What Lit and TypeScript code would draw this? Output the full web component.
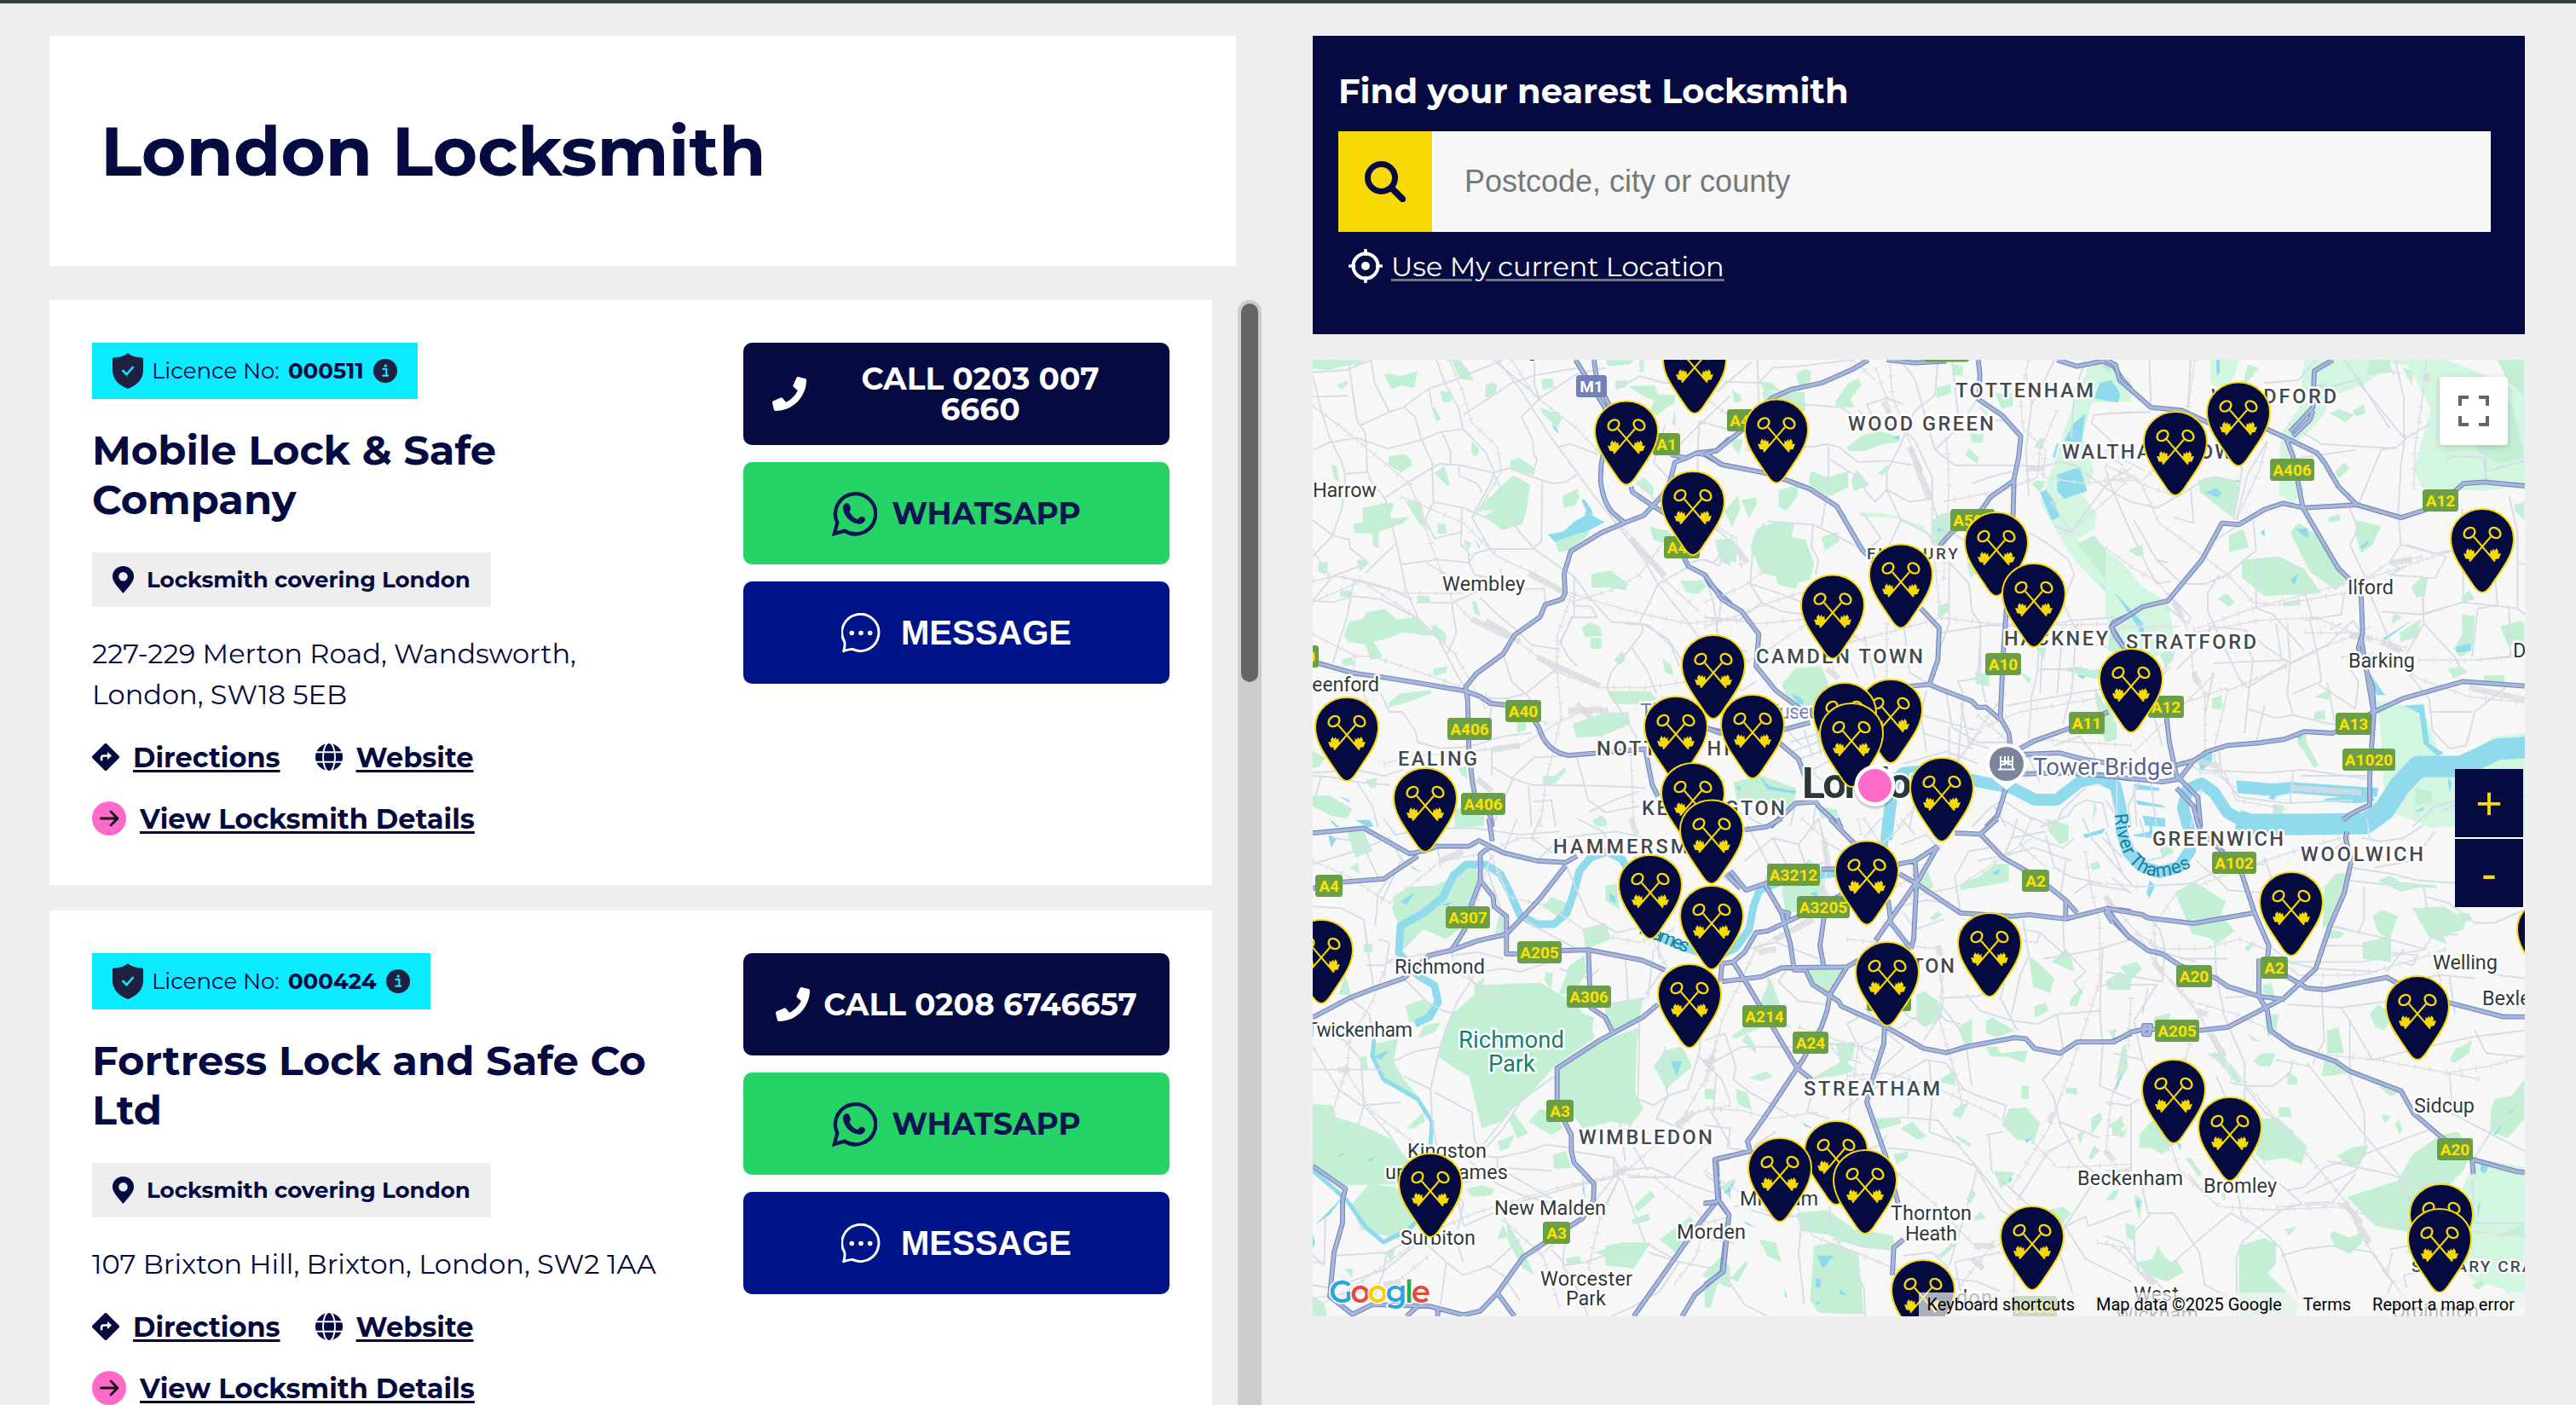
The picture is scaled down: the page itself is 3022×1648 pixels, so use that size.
import { LitElement, html, svg, css } from 'lit';
import { customElement, property } from 'lit/decorators.js';

interface Locksmith {
  licence: string;
  name: string;
  area: string;
  address: string;
  phone: string;
}

interface Tile {
  x: number;
  y: number;
  sy: number;
  parks: string;
  light?: string;
  water?: string;
  minor: string;
  rail: string;
  yard?: string;
  major: string;
}

const LOCKSMITHS: Locksmith[] = [
  {
    licence: '000511',
    name: 'Mobile Lock & Safe Company',
    area: 'London',
    address: '227-229 Merton Road, Wandsworth, London, SW18 5EB',
    phone: '0203 007 6660',
  },
  {
    licence: '000424',
    name: 'Fortress Lock and Safe Co Ltd',
    area: 'London',
    address: '107 Brixton Hill, Brixton, London, SW2 1AA',
    phone: '0208 6746657',
  },
];

// x, y of the pin tip; later entries are drawn on top
const PINS: number[][] = [
  [1988, 486], [2626, 547.5], [2084, 567.5], [1908, 569.5], [2552, 582], [1986, 652],
  [2912, 696], [2342, 700], [2230, 737.5], [2386, 760], [2150, 773.5], [2010, 844],
  [2500, 860], [2218, 896], [2164, 900], [2056, 914], [1966, 916], [1580, 917],
  [2172, 924], [2278, 988], [1986, 994], [1672, 1000], [2008, 1037.5], [2190, 1085.5],
  [1936, 1102], [2688, 1122], [2008, 1138], [2990, 1154], [2334, 1170], [1550, 1178],
  [2214, 1204], [1982, 1230], [2836, 1244], [2550, 1342], [2616, 1386], [2154, 1414],
  [2088, 1434], [2188, 1448], [1678, 1452], [2864, 1488], [2384, 1514], [2862, 1517],
  [2256, 1577],
];

// text, centre x, centre y
const SHIELDS: [string, number, number][] = [
  ['M1', 1867, 453], ['A1', 1955, 521], ['A41', 1973, 642], ['A40', 1787, 834],
  ['A406', 1724, 855], ['A406', 1740, 943], ['A40', 1526, 770], ['A406', 2052, 493],
  ['A503', 2314, 610], ['A10', 2350, 779], ['A11', 2448, 848], ['A406', 2284, 411.5],
  ['A406', 2689, 551], ['A12', 2863, 587], ['A12', 2541, 829], ['A13', 2761, 849],
  ['A1020', 2779, 891], ['A4', 1559, 1039], ['A307', 1722, 1076], ['A205', 1806, 1117],
  ['A306', 1864, 1169], ['A3', 1830, 1303], ['A3', 1826, 1446], ['A3212', 2104, 1026],
  ['A3205', 2139, 1064], ['A2', 2388, 1033], ['A214', 2070, 1192], ['A24', 2124, 1223],
  ['A205', 2216, 1173], ['A232', 2387, 1533], ['A102', 2621, 1012], ['A20', 2574, 1145],
  ['A2', 2668, 1135], ['A205', 2554, 1209], ['A20', 2880, 1348],
];

// text, x, baseline, width, class
const LABELS: [string, number, number, number, string][] = [
  ['Edgware', 1768, 418, 80, 'town'],
  ['Harrow', 1540, 583, 75, 'town'],
  ['Wembley', 1692, 693, 97, 'town'],
  ['Greenford', 1516, 811, 102, 'town'],
  ['Ilford', 2754, 697, 54, 'town'],
  ['Barking', 2755, 783, 78, 'town'],
  ['Dagenham', 2948, 771, 108, 'town'],
  ['Twickenham', 1532, 1216, 125, 'town'],
  ['Richmond', 1636, 1142, 106, 'town'],
  ['Kingston', 1651, 1358, 93, 'town'],
  ['upon Thames', 1625, 1382.5, 144, 'town'],
  ['Surbiton', 1643, 1460, 88, 'town'],
  ['New Malden', 1753, 1425, 131, 'town'],
  ['Morden', 1967, 1453, 81, 'town'],
  ['Worcester', 1807, 1507.5, 108, 'town'],
  ['Park', 1837, 1531, 47, 'town'],
  ['Mitcham', 2041, 1414, 92, 'town'],
  ['Thornton', 2218, 1431, 95, 'town'],
  ['Heath', 2235, 1455, 61, 'town'],
  ['Beckenham', 2437, 1389.5, 124, 'town'],
  ['Bromley', 2585, 1398.5, 86, 'town'],
  ['Sidcup', 2832, 1305, 71, 'town'],
  ['Welling', 2854, 1137, 76, 'town'],
  ['Bexleyheath', 2912, 1178.5, 126, 'town'],
  ['West', 2503, 1526, 53, 'town'],
  ['Wickham', 2482, 1550, 97, 'town'],
  ['Orpington', 2806, 1546, 102, 'town'],
  ['Croydon', 2243, 1530, 94, 'town'],
  ['WOOD GREEN', 2168, 505, 171, 'district'],
  ['TOTTENHAM', 2294, 466, 162, 'district'],
  ['WALTHAMSTOW', 2419, 538, 200, 'district'],
  ['WOODFORD', 2594, 473, 147, 'district'],
  ['HACKNEY', 2351, 757, 122, 'district'],
  ['CAMDEN TOWN', 2060, 777.5, 196, 'district'],
  ['STRATFORD', 2494, 761, 153, 'district'],
  ['NOTTING HILL', 1873, 886, 187, 'district'],
  ['KENSINGTON', 1926, 955.5, 168, 'district'],
  ['EALING', 1640, 898, 93, 'district'],
  ['HAMMERSMITH', 1822, 1001, 205, 'district'],
  ['WIMBLEDON', 1852, 1342, 157, 'district'],
  ['STREATHAM', 2116, 1284.5, 160, 'district'],
  ['BRIXTON', 2184, 1141, 109, 'district'],
  ['GREENWICH', 2525, 991.5, 154, 'district'],
  ['WOOLWICH', 2699, 1009.5, 144, 'district'],
  ['FINSBURY PARK', 2190, 656, 172, 'district small'],
  ['ST MARY CRAY', 2829, 1491.5, 155, 'district small'],
  ['The', 1924, 842, 40, 'poi'],
  ['Museum', 2067, 843, 88, 'poi'],
  ['Tower Bridge', 2385, 909, 164, 'sight'],
  ['Richmond', 1711, 1229, 124, 'green'],
  ['Park', 1746, 1256.5, 55, 'green'],
  ['London', 2114, 936, 154, 'city'],
];

const TILES: Tile[] = [
  {
    x: 1530, y: 410, sy: 2.8,
    parks: `M30 34h180l-10 15-60 5-60 15-50-8zM283 78l55 8 60-15-5 30-8 25-42-8-35 12-20-35z
      M518 34h30l25 30 25 38-45-5-18-25zM113 120l38-20 5 10-22 22zM480 135l40 8-2 28-30 5z
      M640 115l20-8 20 12-10 30-35 8zM450 195l8-8 22 40-15 10zM590 300l27 30-15 25-15-20z
      M835 98l40-4 5 30-40 8zM832 190l35 15 30 0 10 20-20 40-15-25-35-30zM1060 34h100l-15 15-75 5z
      M1095 103l45-3-10 25-35 2zM1140 120l95-2 10 30 62 2-5 30-25 8-35 30-28-10 18-40-50-22z
      M1180 34h15v40h-15zM1295 240l10-45 2 60zM297 350l55-6 25 18 0 20-35 22-45-25zM95 380l20 0 8 55-18-10z
      M458 405l35-22 20 60-10 5zM725 365l30-10 55 32 0 25-85-20z
      M735 413l60 30-12 80-15 50-70 20-65-45 35-20-60 0 70-65zM908 480l55-22 5 25-15 30-40 8z
      M205 520l75-15 35 0-15 50 70-5-20 20-90 30 5 50-22-2-5-45-60 0-5-30 35-5zM355 498l55 0 20 90-20-10z
      M470 572l25 0 8 33-33 0zM880 620l50-40 80-30-10 60-70 50-35 5zM1165 440l30-22 35 35-5 30z
      M1215 580l35 10 30 5 30 30-50 10-30-10zM1450 625h50v85l-35-15zM185 690l30 0 5 20-25 20z
      M48 700l38-2-10 40-25-8zM130 792l35 0 0 20-40 0zM395 808l45 2 5 22-45-5zM590 828l15-2 15 50-20-8z
      M560 625l30 10-15 28zM1010 738l70-12 60 45-8 20-55-10-65 0zM1325 760l80-2 10 22-30 22-40-5z
      M160 892l45-5 15-25 65-10 40 35 60-8 70 60-30 0-80-10-50 20-50 10 30 50-40 10-20-50-60-10-15-20z
      M445 905l20 0 35 30 0 30-40-25zM975 915l30-20 35 15 10 30-60 5zM1008 948l38 0 0 35-38 0z
      M1090 1020l30-30 10 30-20 15zM1262 1015l30 20 8 35-30-10zM455 1048l50-8-5 22-45 10z
      M298 1160l40-30 110-12 0 12-90 30-60 15zM1065 1122l150 0 25 25-40 20-110-5zM745 1195l35 15 0 40-30 8z
      M945 1230l105-35 90-5 8 40-100 40-90 5zM30 1465l60 0 80 45-20 30-60-10-60-30z
      M840 1400l40 0 40-30 0 15-35 40-45 5zM30 1320l45 20-20 30-25 5zM215 1415l40-8 0 30-20 5z
      M540 1370l30 0 5 40-20-10zM530 1510l50-10 60 10-10 55-100 5zM1015 1545l30-15 20 15 0 20-40 0zM130 1020l40-10 5 25-35 5z`,
    water: `M975 495l12-3 25 35 5 20 40 20-60 30-40 10-50 15-25 10-25-25 60-10 30-30 40-20 5-20z
      M873 245l20 20 2 12-18-18zM597 620l20 25 0 10zM120 1465l40 15 0 8zM85 1538l40 30h-15zM180 1545l50 0 15 20-20 5z`,
    minor: `M30 75l120-8 85-33M155 152L30 155M30 85L60 200 90 290 130 365 145 410 140 480 130 530 100 610 30 680
      M155 34L165 100 185 230 215 275 218 310 222 400 235 430 285 490 320 620 340 700 355 780 400 880
      M235 34L248 110 300 205 350 190 405 150 440 128 495 112 555 90 700 34M200 248L300 205M440 128L450 190 480 230
      M350 190L390 220 412 295 450 370 455 500 425 560 460 620 550 600
      M30 330L90 305 185 290 215 300 295 325 410 298 480 270 555 262
      M465 34L500 120 545 195 558 260 600 300 640 340 670 405 650 450 590 550 620 600 655 655 810 655
      M485 270L515 335 515 375M545 385V415L610 440 625 470M145 408L225 402
      M280 490L350 445 475 375 550 380 665 405 720 390 870 440 920 435 960 410
      M665 405L690 450 750 590 810 655 900 715 950 745 1000 810 1080 895 1190 900 1280 950 1350 1050 1370 1090
      M838 430L835 630 810 650M665 34L830 160 765 220 805 300 808 345 820 360 805 410
      M680 34L760 130 870 290 1020 480 1190 680 1245 770 1330 870 1400 960
      M810 34L810 120 830 160 960 80 1060 60M560 215L730 110 810 85 900 70 970 60
      M30 560L100 610 160 625 160 650 225 700 100 745 30 825 100 830 170 810 270 820 395 880 465 940 500 1000 545 1080 565 1110
      M345 705L470 690 580 700 600 670 655 655M215 735L320 640M130 745L170 755 310 790 380 820
      M395 830L520 832 620 790 850 785M520 835L535 930 505 1000M620 815L680 870 745 920 800 970 900 985M580 700L600 740 700 760 690 720
      M700 1000L730 1090 790 1140 830 1220M895 320L935 310 1035 345M640 1125L640 1145 720 1145 780 1130 885 1050 960 1070
      M900 970L940 880 1030 880 1010 845 950 840M1190 900L1190 930 1140 990 1080 1060 1065 1110 1130 1210 1180 1290M1150 975L1210 1060 1240 1130
      M1130 900L1210 905 1290 970 1320 1040M270 1130L300 1190 345 1190 390 1250 400 1290 480 1310 580 1305 700 1270 800 1260
      M30 1390L180 1380 280 1400 350 1380M100 1030L150 880 175 760M660 1370L730 1408 800 1430 1040 1433 1200 1440
      M730 1408L810 1340 1000 1330M735 1410L690 1500 665 1565M790 1435L800 1568M960 1340L1000 1480 1060 1520 1180 1500
      M185 1420L240 1500 260 1568M30 1400L100 1405 180 1420 300 1430M1245 770L1350 715M1245 770L1200 860 1180 895
      M950 745L950 870M1350 110L1270 110 1180 88 1100 130M1385 340L1385 400M1270 250L1230 370 1290 430
      M455 500L560 520 660 560M555 520L552 640 580 670 580 700M805 1485L870 1480 885 1568M845 790L850 840 900 830M660 1305V1400M430 700L500 740
      M1390 235L1500 265M1300 330L1500 150M1390 235L1385 340M1360 700L1400 690 1440 700 1500 640M1420 770L1440 830 1460 960M660 1165L650 1240M30 1500L60 1400M950 870L900 960 930 1010 960 1040M1000 1520L1090 1480 1180 1450`,
    rail: `M30 185L130 255 215 320 370 440 400 510 450 650 520 820 590 890 700 920 890 1060 1040 1110 1200 1110 1500 1070
      M510 34L555 130 590 240 680 320 695 400 600 550M730 34L810 150 960 260 1050 350M30 760L110 745 230 765 350 800 560 800
      M30 935L180 1005 250 1010 500 1090 860 1230M340 485L400 505 560 570 680 680 820 740 900 790 1130 855 1350 900 1500 885
      M1100 560L1180 650 1260 750 1390 860M940 810L890 940 890 1060 905 1210 850 1420 830 1568
      M580 1320L760 1300 905 1220 1020 1170 1100 1200M30 660L90 745M1150 1330L1160 1568M280 1360L400 1330 560 1330M1080 790L1180 740 1260 640
      M180 1005L175 1050 230 1180 240 1280 160 1350M940 830L1080 790M1380 140L1500 220M1160 420L1240 500M30 830L200 760 380 870 530 1000 640 1180`,
    yard: 'M590 885L720 945M640 890L760 960M820 1010L1040 1105M1150 620L1270 745M790 735L910 795M930 1185L1070 1185M960 1165L1010 1210M660 1315L760 1300M610 1410L660 1450',
    major: `M955 34L1058 190 1065 280 1045 380 1043 430Q1052 505 1090 540L1130 570M1020 34L1030 100 1075 185
      M1500 290L1450 332 1380 340 1340 358 1305 370 1285 440 1260 480 1195 545 1130 568 1045 602 938 663 915 735 918 800 908 820 848 838 830 878 740 938 700 1000 605 1065 568 1108 575 1150 580 1320 592 1420 600 1460 655 1530 662 1568
      M1380 340L1410 345 1470 378 1500 383M1150 450L1155 468 1225 512 1290 550 1340 690 1352 712 1410 740 1425 768 1500 835
      M50 1030L170 1062 290 1078 420 1098 568 1122 620 1140 655 1162 715 1168 800 1205 825 1240Q850 1320 930 1333L1200 1312 1225 1430 1245 1468
      M1400 1240L1500 1262M1290 345L1340 355`,
  },
  {
    x: 2000, y: 410, sy: 2.8,
    light: `M1360 34L1440 60 1500 100V170L1360 175 1330 290 1370 400 1330 480 1380 540 1370 590 1310 620 1500 800V900L1400 790 1300 690 1240 600 1180 500 1220 400 1260 280 1300 170z
      M545 533l80 5 60 10 90 35-10 10-80-38-140-8z`,
    parks: `M190 105l50 5 20 25-50 5zM320 80l30-15 22 5 0 35-40 15zM200 140l150 0 5 60-60 20-80-30z
      M460 170l45-60 35-15 12 20-40 50 15 25-65 0zM95 130l30 20 5 20-25 5zM100 290l35 5-15 50-25-30z
      M870 50l38 2 0 33-38 0zM815 125l50-12 2 30-50 15zM500 320l60-40 60-10 65 15 0 18-70 10-50 20-60 0z
      M935 275l48 5-5 25-40 0zM915 345l15-20 35 30-5 20zM365 435l10-35 60 20 70-20 0 50-60 30-60-10z
      M515 430l20-35 45 50-55 20zM260 460l70-15-5 40-40 45-25-15zM70 530l45-50 10 40-30 65zM130 495l50-10 5 20-30 50z
      M35 625l60-5 20 30-5 50-60-20zM160 650l20-60 70-25 65 10-10 40 50 10 30 80-15 50-40 10-10 20-60-10-10-30-50-10z
      M408 615l60-15 5 30-50 30zM610 405l30-25 10 10-25 25zM800 560l30-20 60-10 40 10-60 60-60 40-15-5z
      M920 690l30 20 5 30-20 10zM820 845l35-15 5 30-40 25zM270 1100l50-55 90-5 25 55-20 90-100 5z
      M1020 140l40 10 20-10 5 45-40 10zM1150 440l20-10 30 5-20 35zM1420 930l50-50 30 30v100l-80-20z
      M1265 1045l60-5 20 15 65-10-10 40-60-10-70-20zM950 1060l50 5 0 40-45-5zM1165 980l35 0-5 40zM1110 1060l40 20-10 20z
      M1370 1110l80 120 0 50-40 10-20-50zM100 1420l100-20 120 40-5 65-100-10-100-5zM395 1500l70 10 5 25-60 5z
      M1310 640l60-30 130 150v100zM1400 34l30 10 0 40-30-20zM1160 320l20-30 15 5-10 35zM1370 1480l10 30-15 40z`,
    water: `M1370 160l20-50 40-10 30 40-15 33zM1265 300l35-60 40-30-15 95zM1240 410l80-25 25 80-80 25-25-25z
      M1180 470l20-10 30 40 20 50-30 10zM660 290l25-8 0 15zM305 1130l35 15 10 15-20 10zM815 585l25 5-15 10z
      M190 1400l40 35 90 15 0 10-100-15zM105 1435l25 0-8 15zM1225 350l15-45 5 5-15 50zM1390 765l60 55 50 60v15l-60-70zM1310 1070l30 0-8 12z`,
    minor: `M40 140L165 40M70 105L190 110 240 60 330 55 520 34M185 34L190 180M140 330L260 330 310 320 380 320 430 310 470 320 540 370 640 365 730 380
      M435 310L435 450 410 580M690 34L740 100 810 330 880 380 1100 380M820 34L810 150 740 200 720 240 690 310 640 400 640 460 690 560 650 640
      M440 360L540 420 570 470 600 500 640 460M540 200L600 250 570 180 640 160 700 180M690 250L740 300 800 420 800 500 850 640
      M870 34L880 120 890 200 900 250 810 330M900 250L940 190 960 160M970 190L1010 230 1060 235M1150 180L1170 150 1230 34M1130 80L1150 180 1130 330 1140 480
      M1110 380L1180 385 1250 370 1300 380 1420 460 1500 500M1230 580L1290 600 1320 560 1400 460 1440 420 1500 390
      M220 565L380 575 440 600 520 640 560 660M380 575L375 650 400 690 390 740M210 570L170 640 160 770 200 830 270 860 350 870
      M0 690L50 710 60 690 100 660M0 560L80 620M160 770L260 800 340 830M560 540L620 620 570 660M690 560L780 600 820 650 860 700 860 900 790 1080
      M830 930L1000 905 1180 910 1290 890 1440 880M860 700L930 770 940 860 970 900 970 1080M1140 600L1210 640 1280 690 1300 740 1260 830 1290 890
      M1180 910L1170 1060 1150 1140 1140 1280M1060 1170L1290 1130 1430 1110M1170 1050L1350 1050M1190 940L1180 1130M1260 910L1240 1130M1310 900L1290 1130 1260 1230M970 940L960 1080 890 1090 910 1130
      M970 1080L990 1160M700 900L720 1060 790 1100M560 940L600 1080M480 960L540 1080M850 1130L870 1240 960 1290 1070 1290M900 1160L930 1290 1000 1310M780 1120L760 1200 780 1320
      M760 1200L950 1250M770 1260L940 1310M700 1360L850 1320 960 1360M860 1240L860 1360M910 1150L890 1350M280 1240L340 1300M300 1290L440 1250M310 1320L450 1270M350 1250L380 1340M390 1240L410 1330M320 1350L460 1300M340 1400L440 1350
      M0 1040L60 1080 130 1120 180 1090M180 1040L230 1020 300 1010M0 950L70 980 150 990M0 1100L40 1110M60 1090L100 1160M0 880L120 890 200 830M60 820L40 930M0 1500L80 1500 200 1560M320 1490L300 1568M390 1500L380 1568
      M1110 1330L1200 1360 1240 1400 1330 1390M1140 1340L1180 1420M1230 1300L1320 1270 1370 1330 1380 1400M1180 1568L1280 1530 1300 1500 1340 1480 1400 1490 1420 1568M1230 1568L1260 1510 1340 1440
      M720 1568L740 1480M940 1568L1010 1500 1050 1480 1130 1530 1230 1568M1060 1568L1020 1500M1340 34L1300 140 1290 290M1360 240L1370 215 1500 205M1360 240L1500 360M870 600L930 640 920 690M940 440L1000 420 1080 400M1290 890L1330 960 1420 980M480 190L560 240 680 250M250 130L350 180 470 190M640 460L720 500 800 490`,
    rail: `M650 34L660 150 720 300 760 400 800 480 800 620 830 880 760 900 600 940 430 980M600 60L640 160M520 34L600 100
      M1140 34L1110 150 1120 260 1200 330 1190 420M1240 200L1180 330 1170 420 1060 460 840 500M850 290L860 440 840 760
      M0 910L100 880 230 830 330 800 540 800M0 830L130 780 250 700M0 560L110 620 130 720M0 1090L200 1000 360 900 500 880
      M430 960L460 1080M640 900L640 1080M830 880L1000 900 1240 905 1480 900M870 1380L1000 1200 1060 1130M870 1380L980 1240 1110 1190 1410 1140
      M1190 420L1340 440 1500 420M1220 500L1290 600 1500 420M340 1360L420 1420M0 880L200 900 420 880 560 960M680 1568L800 1440M1500 1300L1320 1290 1180 1280M960 1200L1070 1290 1150 1400`,
    yard: 'M630 170L650 210M740 370L790 490M720 320L760 400M430 1050L470 1080M110 650L150 700M1130 390L1190 390',
    major: `M0 345L45 330 130 265 235 160 300 132 410 110 520 65 575 34M0 340L60 378 210 405 290 430 370 458 465 515 555 660 600 700M760 850L825 915 820 1020 790 1100 730 1105 650 1115
      M640 34L740 44 850 38M962 34L968 80 965 165 1045 215 1112 285 1105 350 1088 425 1085 540 1060 870 1050 1000 1040 1210 1070 1260 1075 1300
      M1088 430L1005 485 975 525 870 600 825 645M790 1100L820 1112 940 1155 960 1175 990 1175 1040 1215
      M0 740L60 820 130 860 190 935 180 1040 250 1120 350 1190M1110 1310L1160 1285 1280 1245 1420 1190M1110 1330L1250 1325 1330 1345 1500 1370
      M1060 1440L1030 1530 990 1568M0 1240L60 1262M250 1255L370 1225M260 1290L330 1345 370 1450 400 1500 480 1568
      M1240 34L1310 55 1400 38 1440 55 1470 100 1500 130M1500 870L1440 895 1430 910 1480 985M230 1568L320 1490 400 1485M1110 1395L1250 1390 1420 1400 1500 1410`,
  },
  {
    x: 2470, y: 410, sy: 2.8,
    light: `M700 34h230l40 40-60 40-120 40-20 60-60 60-50 40 0 60 40 90-40 40-50-30 0-100 10-100 60-80zM940 34h260l60 20 215 90v300l-140 20-220-10-30-60 60-200-80-140z
      M0 660L60 700 130 780 220 830 240 930 180 1010 70 985 20 910 0 880zM940 1150l120 20 60 20 60 150 90-10 100-60 105-10v290l-330 20-160-60-20-300zM370 34h100l-20 60-50 50-30-40z`,
    parks: `M540 60l-60 70 20-80zM930 34h70l10 40-90 10zM700 130l60-20 60 25-60 25zM790 210l30-15 55 20-30 25zM870 200l40-20 5 30-35 10zM1045 60l35 10 0 50z
      M1380 34h95v120l-60-50zM1300 180l130-5 45 180-90 20-80-40zM325 430l60-15 70 15 20 30-15 60-15 30-110-80zM435 610l50-20 20 60-70 15zM490 690l120-10 90 40 60 80-200 10-80-60 0-60z
      M650 600l30-30 80 50 60 80 40 50-50 40-90-60zM810 400l30-30 20 20-40 35zM880 560l90 20-30 60-40 30-20-60zM785 550l40-8 0 20-40 5z
      M395 820l30-20 30 30-20 15zM1005 885l15-20 22 15-30 20zM1035 930l75-45-10 60-60 15zM1075 780l35-30 25 0-10 60-30 5zM1255 870l45 5-10 110-40 25-25-25 30-50z
      M1390 910l70-20 15 10v60l-60 10zM1205 1050l50-10 20 20-50 20zM1330 1070l75 0 0 25-70 10zM735 1140l60-25-10 35zM375 1145l35-10 0 45-35 0zM735 1190l35-5 5 30-40 0z
      M680 1250l20-5 10 50 40 70-15 10-40-60-20-20zM590 1495l35 0 0 30-35 0zM1090 1440l60 10 0 40-60 5zM1440 510l35-10v60l-35-30zM80 660l50-20 5 30-20 10z
      M690 690l60-15 10 30zM0 1150l30 60-10 70-20 0zM190 1000l40-20 10 40-30 20zM625 830l60-10 0 20-60 5zM1250 820l30-30 20 30-40 10z`,
    water: `M0 110l25 0 28 40-10 25-43-10zM350 470l40-15 20 20-20 10zM450 430l25 0 0 10zM670 590l40-5 5 35-20-10zM545 600l15-10 0 25zM650 755l30-20-15 40zM890 655l30-25 10 0-20 20z
      M785 730l40 35-45-40zM1235 975l50-10 0 25-50 5zM975 950l110-65-100 70zM675 1265l15 0 0 15-15-3zM460 1415l130 10 60-5 310 20-5 30-60-8-30 10-210-15-60 10-130-10zM770 1475l160-15 20 20-60 10-120-5zM590 1450l15 0-10 30-20-5z
      M325 1345l20-30 30 10 0 30-40 30zM100 1425l90 15 0 10-80-5zM105 1480l90 15 20 10-100-10zM130 1530l80 10 0 28-70-5zM920 1050l60 80 10 5-35 0zM1050 1170l70-5 20 130 50 30-20 10-50-40-15-100z
      M1205 1405l15 20-10 30zM1085 1520l40-20-10 15zM30 795l100 100 20 100-40-90zM390 34h12l0 40-10 15z`,
    minor: `M155 34L160 190M300 34L290 190M560 110L680 100 740 34M480 100L470 260 480 400 450 560M0 210L160 205M0 390L20 450 70 560 140 700 180 770 230 760
      M90 500L180 520 260 480 360 420M240 550L310 570 300 460M100 560L180 690 220 700M180 690L270 770 350 770 430 740M360 640L430 600 500 560M430 740L490 690 530 660
      M530 690L530 850M640 240L760 310 1020 325 1060 290 1150 240M1055 280L1040 380 1030 540M1020 34L1050 160 1050 290M760 130L880 100 920 140 1050 290
      M1200 360L1220 350 1330 355 1340 430M1340 400L1475 365M1340 400L1335 330M850 500L890 590 860 640 880 680 920 760M885 520L970 330 1020 320
      M1030 540L1040 640 1000 700 1040 720 1000 740 1160 750 1200 680 1040 640M1255 520L1260 830 1120 870 1115 820M1260 830L1450 850 1475 870M1420 480L1450 600 1450 850M1450 700L1475 705M1370 730L1380 840 1310 850 1290 1010M1300 1020L1425 1010 1420 840
      M400 740L360 800 360 860 470 1080 500 1110 640 1030M370 910L490 920 570 980 650 1030 780 970 870 890 900 930M490 920L500 980 520 1020 500 1160 490 1260M640 900L650 1030 640 1130 660 1200 790 1230 870 1230
      M720 890L750 1020 760 1090 660 1130M380 1030L640 1020M380 1060L350 1200M120 1420L80 1500 90 1568M860 1050L890 1090 880 1180 750 1100M780 1090L810 1240M790 920L830 900M840 800L830 870 700 890M700 790L730 890
      M560 1170L530 1290M500 1180L600 1210 660 1200M250 1050L350 960 370 910M230 1040L180 1090 120 1100M150 1080L170 1200 200 1300M270 1350L330 1380 560 1390 700 1380 920 1410
      M400 1320L410 1400 470 1470 640 1490 870 1480M660 1390L650 1490M40 1410L40 1568M160 1420L180 1568M100 1430L110 1568M340 1440L300 1568M690 1400L920 1400M1040 1030L1140 1150 1150 1250 1210 1310 1270 1300 1300 1190 1420 1100M1140 1190L1290 1190
      M1060 1000L1120 900 1230 1010 1250 1050M930 800L1010 980 1050 990M1180 1520L1260 1480 1340 1500 1475 1470M1080 1568L1160 1500 1280 1470M0 1480L30 1520M200 1060L240 1000 250 960M1115 740L1120 900M970 860L1110 870 1260 830M1060 640L1160 670 1220 660M570 300L500 410 460 560M60 380L0 340
      M520 560L530 660M530 850L590 870 700 990M600 900L620 1020M650 360L880 330M840 34L900 110 1000 260M210 840L290 900 300 880 240 820`,
    rail: `M315 34L290 190 240 480M0 380L120 430 190 570 320 660 430 740 520 830 600 840 840 800 1000 700M0 650L100 720 180 760 260 850 300 960 310 1080 350 1130 350 1320
      M310 930L540 890 740 880 870 930 1060 980M380 1320L430 1120 640 1040 760 980 900 930 930 910M310 920L520 850 840 770 930 750 1220 660M1130 34L1110 200 1090 320 1085 460M0 430L130 430 200 370M460 560L540 400 570 300
      M0 330L140 400M250 1170L430 1110M60 910L260 910M830 1010L1000 1000 1100 1080 1280 1140 1475 1160M1100 1020L1300 1020 1475 1000M330 1390L420 1390 460 1480 640 1510M1000 700L1120 680M100 1320L260 1180 380 1070M380 1330L400 1400 460 1440
      M960 60L1040 80M700 930L900 930M240 480L120 440 60 390`,
    yard: 'M310 1060L330 1100M1010 700L1080 690M1130 80L1130 110M240 830L270 880M860 940L940 950M970 960L1040 990M1280 1110L1475 1150M320 1350L400 1370M660 1440L900 1455',
    major: `M0 34L35 50 50 100 160 190 270 200 360 240 570 262 635 290 745 340 770 370 820 450 885 510M635 290L660 350 695 520 820 720 860 755 900 810 905 930 890 980 940 1110 945 1190 930 1400 930 1495 865 1525 835 1545
      M800 34L735 70 730 190 650 270M730 200L720 230 660 285M20 910L130 845 220 825 340 690 410 570 470 575 560 525 625 505 700 520 885 510 1040 552 1130 525 1200 490 1260 440 1335 435 1475 448
      M20 910L35 940 70 985M215 1210L225 1290 250 1400 325 1470 335 1568M250 1365L310 1350 360 1320 430 1300 540 1292 630 1280 700 1255 800 1260 945 1190 1050 1145 1260 1090 1475 1105
      M0 1400L100 1410 200 1420 260 1410 310 1350M250 1440L310 1500 330 1568M900 950L945 1200`,
  },
  {
    x: 1530, y: 960, sy: 2.6133,
    parks: `M600 540L600 510 635 487 630 510 830 503 960 570 1025 670 880 760 800 840 740 880 690 930 625 950 580 790 540 770 470 730 480 690 520 600z
      M895 765L1040 685 1180 640 1170 700 1165 840 1195 890 1150 940 1080 930 980 950 940 900 890 850zM1060 570L1195 550 1180 610 1090 650 1060 610z
      M30 875l70 5 10 35 75 20 115 45 80 80-30 60-205 5-115-60zM320 235l50-25 90-5 40-15 40-30 65-10 15 40-30 70-30 70-60 40-80-30-80 70-20-10 10-80-20-40z
      M165 1185l65-65 90 10 70 50-10 60-50 50-130-30zM355 575l60-20 35 10 0 40-80 20zM250 690l80-15-15 70 40 60 50 50-120-45-40-80zM420 635l60-10-20 30-60 20z
      M895 540l40-90 50-30 10 50-40 60zM850 470l25 5-5 50-25-30zM840 270l30-30 55 20-20 50zM980 340l80-20 20 50-90 30zM1060 205l40-5 10 80-50-30zM690 290l15 15-5 50-30 0z
      M960 590l60 20-10 60zM1230 760l40-50 60-10 35 60-90 70zM720 920l20-15 50 60-40 15zM790 930l40-40 60 20 20 40-40 20zM680 990l60-20-20 40-30 10zM875 1030l45-10 20 50-60 5z
      M1160 1190l60-50 15 20-60 45zM1250 1290l110-70 20 30-60 90zM1060 1310l60-10 100 0-60 80-100-10zM1020 1330l40-10 0 20zM920 1350l50-10 5 20-50 10zM570 1135l50-10 50 10-10 20-70 5zM680 1290l20-45 20 40z
      M710 1230l60 90 40 80-40-20-50-80zM1150 1230l60-20 10 20-60 15zM1400 1400l70-60 30 40v60l-60-20zM280 1330l40-10-10 40zM140 1380l30 0 0 30zM160 150l30-15 5 35zM200 730l20 0 5 40-20 0z
      M360 950l60-50 5 30-40 20zM30 1465l40 20 10 40h-50zM210 385h30v25h-30zM120 540l25-60 20 60zM150 40l60 0 30 60-60 20z`,
    water: `M85 50l30 10-20 30zM340 255l50-30-30 40zM1290 745l40 0-20 45zM110 1040l40-20-20 15zM225 1045l30-10-20 15zM365 140l50 25-30-10zM980 1090l10 80-10-30zM1075 230l20 10 0 20-20-10zM240 730l60-20-30 30zM470 265l55-10-20 12z
      M40 1245l100-90-50 60zM30 1270l8 30-8 20zM1480 1145l20-20v40z`,
    minor: `M100 60L200 70 260 180M30 140L180 100 300 60 360 150M30 270L130 275 210 310 230 440 245 520M260 370L300 380 280 490M270 260L340 130M250 330L260 230 300 180M480 150L460 30M700 105L750 0
      M820 130L900 60 1100 40 1200 60M1150 100L1240 230 1250 430M920 140L1000 300 1100 350 1200 330M640 145L700 300M760 300L830 340 980 410M30 640L140 680 200 740 210 880 190 940M30 770L160 770 330 770M30 700L120 830 200 880 340 870
      M540 600L490 590 430 560 350 490M445 830L470 730 500 640 540 560 600 480M445 830L450 920 470 1020 430 1080M160 550L230 600 240 680M210 880L300 970 360 1050M190 940L140 1000M460 840L590 900 600 990 640 1040M620 1010L740 880 880 790M445 830L350 790
      M600 1030L680 1040 790 1020 850 1000 940 1010M680 1040V1070L870 1080M580 1050L680 1120 780 1160 880 1180M640 1010L700 950 760 870M700 1080L880 1170M940 1020L1090 1040 1110 1080 1220 1070M1090 1040V1090L1120 1110 1200 1300 1320 1360M1150 920L1140 980 1210 1080
      M1180 620L1175 860 1230 880 1280 850 1350 830 1390 720 1400 620M1270 700L1260 770 1280 850M1390 730L1470 800 1500 870M1280 850L1240 920 1330 950 1420 1000M1410 1000L1300 1100 1140 1100M1220 1070L1350 1120 1450 1150M1110 1100L1050 1200 940 1200
      M1090 1100L940 1130 740 1180 560 1250M1320 1360L1440 1380M1210 1330L1320 1360 1250 1450 1150 1500 1080 1526M1000 1526L960 1440 910 1370 920 1270M870 1320L920 1370 990 1360 1060 1340M420 1160L520 1130 620 1100M500 1360L560 1400 660 1370 760 1290
      M500 1360L480 1490M110 1340L290 1330 400 1280 500 1360M290 1330L280 1390 240 1480M160 1420L290 1380 430 1280M30 1340L70 1370 75 1220M30 1360H75M560 1250L540 1160 470 1100M500 1100L560 1180 540 1260M30 1430L100 1440M250 970L340 1100 440 1050M1040 460L1000 490 900 460M620 470L700 460 760 470 900 430M520 420L610 410 700 430
      M700 540L610 520 560 460M1200 550L1060 570M1230 400L1210 550M1260 470L1200 540M280 0L320 50 450 30M480 30L600 30 760 50 900 40M830 0L800 60 880 110M960 0L1050 40 1080 80M330 420L280 450 220 450M640 1370L700 1400 760 1480M1110 930L1130 1050M1420 880L1500 1000M1130 420L1140 560M520 1260L560 1360M385 715L480 700M385 715L300 750`,
    rail: `M30 130L160 180 300 260 480 130 620 110 760 60 830 60M660 120L720 240 860 270 1000 350 1180 380 1300 340M300 440L500 400 650 370 760 320M510 400L540 470 700 560M280 470L240 560 160 680 150 780 240 900 380 990 470 1080
      M150 760L100 900 60 960 30 980M660 110L600 270 560 330M1450 680L1410 800 1320 940 1120 1090 900 1130 600 1210 440 1270 200 1420 60 1490M830 1340L960 1240 1100 1090M700 1230L840 1340 900 1500M1030 1400L1000 1380 1040 1230 1110 1100M1120 1090L1230 1100 1350 1180 1420 1240 1500 1220
      M1410 1230L1380 1340 1300 1430M1240 160L1230 380 1280 460M1500 880L1380 900 1320 950M30 1470L120 1460 300 1440 440 1340`,
    yard: 'M120 770L160 770M480 130L560 100M1410 740L1440 770M1310 940L1370 900M1090 1090L1140 1070M1150 0L1170 50M280 1430L340 1420',
    major: `M30 45L210 30 370 108 420 100 470 85 580 85 615 68 700 105 820 130 920 135 960 115M650 0L662 70M655 85L620 110 620 190 590 260 565 340 515 410
      M620 190L665 240 668 270 712 300 712 415 760 415 900 405 1000 403 1190 435 1270 465M920 145L830 245 712 355 610 375 515 405 440 420 350 490 250 520 160 550 30 610
      M30 215L60 205M135 195L280 185 400 115M1000 403L1008 580 1060 610 1085 655M1245 570L1190 610 1040 680 890 765 890 860 905 910 940 970 940 1020 950 1055 1020 1120 1018 1170 980 1225 900 1270 770 1345 680 1455 620 1510 560 1522 440 1495 240 1490 170 1520 90 1465 105 1330 135 1240 135 1170 145 1135 30 1065
      M680 1455L740 1526M1160 1526L1400 1230 1460 1165 1450 1045 1500 1035M1405 1180L1460 1175 1490 1210M1330 1526L1375 1460 1470 1390 1490 1240M360 1526L400 1495M470 1526V1498`,
  },
  {
    x: 2000, y: 960, sy: 2.6133,
    parks: `M1200 0l80 20 0 50-30 10-40-40zM270 215l50-60 50-30 45 60 0 90-130 15zM355 460l145 0-60 90-40-20zM900 200l60-20 60-40 50 0 0 55-170 25zM760 190l25-30 20 50-40 15zM790 305l30-20 15 10-30 20z
      M1140 420l30 20 60 50-15 45-60-20zM1220 440l50-40 20 30 10 40-50-20zM745 540l30-10 60 40 0 40-60 30-30-20zM180 600l50-110 35 80-30 10zM90 670l80-50 40 15-100 40zM130 680l20-20 30 40 0 20zM460 690l70-5-10 50-40 30z
      M370 800l120-60 40 30-40 15zM155 795l60-20 25 15-40 15zM110 830l40 10 15 55-50-20zM890 640l50-25 0 75-25 5zM990 620l20-10 80 40-60 20-40-10zM990 700l40 0 10 20 95-10-10 40-60-20-60 0z
      M1160 575l40-10 10 25-50 20zM1285 560l15-20 35-25-25 60-25 0zM1410 500l50-30 40 15v40l-80 0zM1420 650l30-5-10 35zM825 800l50-25 10 45-50-10zM870 910l10-20 50-20-30 50zM600 920l90-5 0 20-80 20zM690 950l40-20 50 45-30 10z
      M1045 940l25-50 60-5 50 50-20 50-60 0zM1115 820h25v40h-25zM1270 825l40 0 0 22-40-5zM1360 920l30-20 10 20-40 50zM1430 940l40-30-5 50-30 15zM1310 970l30-20-20 50zM1350 1040l20-40 20 20-30 25z
      M885 970l50 25 0 15-50-30zM1020 1080l70 5-20 30-30 20zM665 1030l50-10 0 20-40 20zM320 1210l110-10 100 60 120 15 20 50-120-10-120-40-90-10zM385 1310l60-10 95 30 20 190-160-5-30-40z
      M190 1290l60 10 20 60-50-20zM55 1130l50-30-20 60zM90 1410l50-50 15 0-40 60zM0 1420l50-10-10 30-20 60-20 0zM620 1310l40-35 10 30-30 20zM820 1340l50-40 10 10-50 40zM1210 1200l50-10 30 20-40 40zM950 1220l20-15 20 20-40 10zM920 1170l20-35 15 15-20 30z
      M0 830l40 0-5 30-35 0zM1480 700l10 60-50 80 30-80zM1355 140l30-10 10 20-30 10zM60 180l15-10 50 30-25 5zM1410 1170l30-30 20 0-20 30z`,
    water: `M1330 50l80-20-10 15-60 15zM370 230l25-8 0 20zM1010 165l30-10-10 20zM65 1150l45-45-20 40zM395 1340l60 0-40 40zM390 1410l20 0-5 30-15-5zM470 1440l30 20-20 0zM280 1440l10 30-8-5zM1125 985l30-10-20 20zM1070 1100l15 5-15 15zM130 1230l50 25-30-10zM340 930l40 20-25-5zM390 1480l20 5-15 8zM1440 840l35-70-20 50z`,
    minor: `M140 130L240 60 330 80 400 0M150 20L230 150 210 200M330 80L360 160 430 130M240 60L300 160M400 0L420 70 500 110M560 60L620 0M690 80L780 50 830 100M690 0L740 50M640 280L780 250 850 260M700 290L740 340 840 310
      M900 290L880 180 930 100 1000 90M1050 120L1080 60 1200 40M1040 0L1160 60 1260 90 1300 60M1200 50L1230 150 1290 180 1400 200M960 130L1070 110 1160 90 1290 130M1270 130L1250 250M1080 60L1100 0M1330 0L1360 60 1460 160 1500 200M1300 230L1350 200 1480 220
      M1120 310L1140 420 1110 480 1080 600M1120 340L1180 350 1170 380 1120 375M1060 480L1040 550 1100 650M840 550L960 545 1030 520M830 570L900 650 920 700 940 820M840 550L830 600 770 680M780 560L850 620 900 630M920 540L970 590 1080 620 1170 630 1240 600 1390 590 1400 400
      M1180 350L1270 420 1390 400 1500 370M1270 420L1190 430M1260 310L1265 400 1340 470 1300 500 1330 540M1240 600L1260 700 1260 730 1190 800 1230 860 1250 940 1270 970M1390 590L1400 700 1390 820 1500 860M0 680L70 660 110 760 100 800 160 840 320 920M0 760L130 700 330 700
      M290 460L260 500 330 560 430 570M150 400L250 380 400 430M220 480L240 570 260 610 300 640M480 570L540 610 500 630 530 680 560 720 600 750M560 580L630 640M630 650L700 700 590 790M590 830L700 780 780 740 850 750 910 830 960 850 1060 880 1050 920M790 740L800 850 790 960 900 1000
      M690 915L820 925 880 990 950 1060 1040 1200 1100 1230M720 790L715 910M640 1010L760 1020 880 1040 960 1070 920 1200 860 1370M440 690L460 720 550 750M300 720L440 690 560 700M40 780L30 900M0 940L90 950 80 1010 160 1020M160 1200L240 1220 330 1220 440 1230
      M440 1190L450 1270 520 1370 560 1440 565 1526M340 1240L330 1330 350 1490M160 1020L250 1100M240 1220L200 1180 100 1190M100 1300L0 1290M450 1290L560 1310 680 1310M660 1420L700 1450M700 1340L800 1330 860 1380M1000 970L1010 1080 1120 1170 1160 1200M990 970L1050 960
      M1270 970L1320 1050 1390 1100 1500 1070M1250 930L1390 980M1380 1100L1260 1260M1270 1250L1340 1220 1350 1250 1500 1200M1260 1240L1340 1350 1500 1420M1040 1330L880 1360 900 1450M1100 1170L1210 1020 1300 980M860 1410L960 1420 1040 1450M940 1050L1060 1180 1240 1310 1300 1470
      M500 800L540 860 480 900M380 830L360 900 440 920M670 560L720 610 780 620M640 420L720 440M820 440L840 540M1430 180L1500 230M1470 120L1400 60M70 1400L140 1490 220 1526M160 1060L180 1000 250 960M0 1090L60 1130M520 1030L620 1000 640 970M430 820L500 800 590 800`,
    rail: `M340 0L420 60 430 150 400 290 180 400M180 400L60 620 20 770 0 820M560 0L620 80 700 20M640 230L760 160 830 80M500 370L820 400 840 450 830 560 690 640 540 700 510 900 490 1030M720 240L890 210 1150 60M1150 0L1110 80 1200 150M1340 100L1360 220 1390 320 1390 500 1290 760 1210 950 1080 1130
      M330 640L500 690 640 720M500 790L640 780 800 820 1000 900 1120 960 1240 1070 1500 1060M640 1060L820 1190 960 1320 1040 1290M0 890L130 895 230 920 400 900M270 1040L330 1200 380 1280 560 1340 720 1400 860 1430M0 1080L130 1150 200 1200 330 1220M900 1430L1000 1320 1100 1280M1090 1350L1085 1526
      M1240 1260L1100 1280 1040 1300M1380 1300L1500 1320M1380 520L1500 480M820 600L890 810 910 900M540 0L550 50M60 0L80 60`,
    yard: 'M420 70L435 150M190 410L250 400M250 370L380 310M410 210L430 240M820 390L830 420M950 1310L1020 1310M940 1350L980 1380M10 760L30 730M1210 930L1230 900M480 810L520 840',
    major: `M140 35L220 25 270 0M440 0L490 45 530 80M465 0L480 30M880 45L970 48 1030 0M970 48L1050 120 1160 175 1270 250 1310 290M680 140L740 130 820 85M740 130L745 195 600 375M820 85L745 200M685 170L745 200 900 290 1080 300 1140 295 1270 308 1420 275 1500 285
      M745 200L735 370 725 400M645 250L655 320 725 400M1270 250L1270 305M1420 275L1445 320 1500 370M90 160L145 220 210 200 290 180M75 170L125 215M210 200L270 290 300 380 315 465 355 465
      M60 500L200 485 270 458 500 455 540 435M60 445L100 440 140 410 180 350 220 345 330 300 480 235M60 445L55 500M410 155L480 155M420 300L405 390 418 450M100 440L150 510 325 765 375 800M270 285L295 290 290 310
      M500 455L440 540 430 590 410 640 345 740 325 765 230 890 150 990 160 1020 35 1045 45 1165 85 1215 65 1390 0 1430M355 465L380 510 470 560 480 575 620 630 700 670 770 705 850 718 920 700 1090 672 1130 675 1160 705 1250 720 1310 685 1430 685 1500 660
      M632 640L630 690 590 800 570 870 635 1030 680 1180M700 1290L665 1315 660 1400M0 1180L45 1175`,
  },
  {
    x: 2470, y: 960, sy: 2.6133,
    light: 'M1340 0h135v60h-60zM1050 1330l170-120 80-170 175 30v430l-80-60-90-20-90-60zM1290 1050l185 50v180l-160-60z',
    parks: `M245 225l70-30 110 60-20 40 50 50-60 40-30-20-60-10zM190 90l40-10 10 25-40 15zM770 210l40-40 60-5-40 80-40 80-25 10zM960 190l40-15 40 20 120 10 10 10-60-5-70 15zM940 300l30-20 60 20-30 70-40-20z
      M1080 275l110-5 80 40-10 30-70 20 10 25-60-20-20-30zM905 380l100-20 0 80-100-10zM780 650l40-10 20 80-60 0zM930 600l30-30 50 30-30 50-30-10zM1210 740l20-30 60-30-10 40-50 30zM1230 705l40-10 10 15z
      M790 340l50 10-10 15-60 5zM490 395l30-20 0 15-20 20zM50 455l60-15 20 20-40 35zM0 500l50-10 10 20zM555 510l30-5 10 40-40-10zM560 600l50 0-10 50-30 20zM170 610l60-15-10 30-50 5zM500 660l45 25-30-5zM520 740l30-20 50 0-20 40-40 0z
      M355 720l40 0 30 15 10 40-40-30zM430 770l10-20 40 60-20 0zM640 775l35 20 0 20-35 0zM760 790l10-50 40 10 40 30-60 10zM960 820l60 0 20 20-40 10zM970 910l35 0-20 25zM1020 940l10-20 15 30-10 20zM120 970l40-40 40-20 60 20-10 60-50 40-40-20-40 0z
      M550 920l60 0 100 85-20 55-60-20-70 10-30-20zM610 885l40 0 5 30-45 0zM815 1035l50-25 60-10-10 30-20 30-30 10zM850 1160l180-50 50-80 100-60 60-10 50 60-30 60-80 70-70 60-30 60-130-20zM630 1260l45-10-30 30zM790 1280l10-15 60 20 50-20-10 40-40 30-50-20z
      M470 1310l90-25 40 20 0 60-30 30 110 90-10 50h-200zM115 1360l50-10 20-40 20 30 25 20 20-10 25 40-60 30-60-20zM1290 1430l30-15 20 10-30 20zM1370 860l60-10 45-50v120l-60 60-60-20 0-60zM1380 1280l50-20 45-20v40zM1240 290l40 0 10 20-30 10z
      M70 1240l35 10-5 45-25-10zM280 1040l20 0 40 50-10 10zM10 940l40-20 20 20-30 20zM30 970l50-20-20 30zM60 700l15-10-20 80-20 30zM100 1150l30 20-10 60-15-50zM405 1150l20 0-5 25z`,
    water: `M95 50l60-10 0-20 10 0 0 40-60-5zM145 230l10-40 20 15-20 40zM1360 975l40-40-20 30zM1410 910l40-30-20 20zM1320 1060l30 5-15 25-15-10zM1310 1190l10-20-10 60zM110 1170l10 0 0 25-10-5zM250 990l15 30 0-20zM30 835l30-70-15 50zM1310 535l10 10z`,
    minor: `M0 40L60 170 100 210 300 200 420 150 560 140M60 20L100 90 140 130 200 120 240 60M120 0L140 60M320 130L400 190 430 220 600 230M560 120L590 200 650 220M860 150L1010 170 1100 190 1270 200M860 190L960 200 1120 210 1130 270 1170 330 1160 360 1240 355
      M910 210L910 310 890 350M950 150L1080 130 1160 40M900 60L970 70 1050 60 1120 20M920 0L930 60M760 120L860 60M1130 240L1210 260 1300 320 1370 320 1475 280M790 330L1000 370 1120 400 1160 350M910 400L1100 420 1080 450 1040 440M760 390L960 390M575 390L650 440 900 440 1130 400M640 440L740 460 960 470
      M385 380L390 480 420 610 490 750 490 940M430 430L260 430M420 550L550 540M760 500L765 600 770 680 730 750M640 570L820 580 1000 560M830 580L860 620 860 790 910 900 915 1020 880 1080 700 1150M860 620L940 740 1130 700 1290 670 1475 650M600 740L720 760M710 750L800 850 920 980 1030 1090 1080 1180
      M660 740L650 780 590 820 500 820 440 810M150 300L190 340 210 400 200 500 0 470M0 510L180 510 100 620 130 740 150 780M150 380L200 410 320 440M390 790L440 890 500 940 520 1040 560 1080 640 1140 690 1180 620 1200 530 1260 480 1300 460 1350 465 1526M640 1140L700 1130 770 1070 940 1020 1150 950
      M490 1040L460 1120 480 1220 560 1270 620 1320 680 1470M500 1240L440 1210 330 1290 240 1360 200 1410M130 1130L150 1210 240 1210 330 1330 350 1430 480 1490M160 1210L100 1270 105 1350 120 1390M0 1280L60 1300 100 1350 200 1440 280 1490M620 1340L700 1320 800 1310 940 1330 990 1400 1010 1420
      M780 1050L1000 1090 1120 1130 1200 1100M1300 1040L1400 900 1475 860M1210 900L1475 1020M1210 780L1220 880M1300 650L1340 720 1475 730M1140 480L1150 620 1120 660M1210 480L1230 600M1380 480L1475 490M990 470L1050 400M1110 490L1180 480 1300 490M1290 1110L1300 1240 1475 1240M1000 1320L1070 1310M990 1400L1010 1330
      M1060 1440L1050 1400 1160 1380M1010 1420L970 1500M0 870L80 880 120 860M130 740L30 720M150 520L130 600M90 880L90 1080 0 1080M290 1090L350 1150M540 980L560 1060M700 1180L800 1175 880 1090M490 820L560 900 660 960M1040 1130L1080 1080 1090 1060M1180 500L1160 440M890 350L810 330`,
    rail: `M0 240L110 350 190 460 330 600 400 720 520 840 700 1020 850 1180 900 1280 1020 1430 1100 1526M180 450L170 330 240 240 400 180 560 130 700 90 830 60M190 460L300 560 460 600 560 640 720 720 960 740 1200 780 1350 760 1475 730M110 350L200 400 350 400 470 370 560 400 680 480 900 480 1100 430 1200 400
      M90 550L80 700 20 860 0 1030M230 1000L260 1080 400 1190 600 1200 830 1190M830 1190L1000 1240 1220 1260 1475 1280M330 600L280 740 270 900 220 1020M0 1300L60 1330 160 1430 260 1526M600 1190L860 1180M1200 780L1320 800M380 720L450 800M0 200L130 210`,
    yard: 'M320 590L360 600M370 660L420 730M840 1180L900 1240M880 1230L930 1300M0 240L40 290M170 440L200 470M0 1020L30 1050M130 1390L170 1430',
    major: `M320 0L335 40 410 100 480 170 525 290 575 390 570 430M540 430L540 545M850 40L845 60 865 130 840 230 790 330 740 460 630 550 430 640 330 650 140 645 90 655 30 685 0 685M135 635H160L155 662H135Z
      M0 275L130 295 150 305 310 322 520 290M0 275L80 360 150 405 200 415 260 450 390 490 430 515 540 545 630 555M540 545L570 590 580 650 660 700 810 745 860 775 1040 835 1085 905 1180 975 1290 1045 1450 1083 1475 1085
      M640 485L710 520 770 525 990 487 1100 540 1210 565 1400 608 1475 608M570 430L640 485M1290 1045L1295 1090M0 285L25 320`,
  },
];

const THAMES = `M2213 985L2217 950 2222 917 2232 907 2250 905 2290 910 2323 917 2360 924 2387 938 2413 938 2440 917 2463 912 2482 922 2488 950 2489 975 2497 1000 2512 1016 2533 1023 2556 1017 2569 998 2569 976 2561 948 2566 926 2583 919 2597 929 2613 953 2637 966`;
const THAMES_EAST = 'M2625 962L2640 967 2703 967 2775 966 2797 950 2815 922 2837 899 2887 899 2930 879 2970 876';
const THAMES_WEST = `M2213 960L2210 998 2190 1022 2147 1025 2090 1034 2064 1044 2057 1063 2052 1090 2036 1112 2015 1122 1997 1118 1977 1112 1943 1098 1915 1030 1903 1008 1885 999 1866 1006 1853 1021 1846 1048 1838 1071 1823 1084 1803 1084 1783 1073 1770 1044 1760 1025 1743 1014 1720 1014 1705 1027 1693 1052 1670 1071 1643 1086 1641 1117 1663 1144 1683 1156 1687 1175 1677 1193 1660 1201`;
const THAMES_UPPER = 'M1612 1218L1610 1239 1623 1266 1663 1289 1680 1316 1678 1343 1682 1380 1673 1419 1653 1442 1623 1457 1603 1440 1580 1408 1560 1390 1540 1373';

const ICONS = {
  shield: svg`<path d="M18 0c3.600 3.500 9.500 5.200 16.500 5.500.8.100 1.500.6 1.500 1.500v13c0 10.500-7 18-18 22C7 38 0 30.500 0 20V7c0-.9.700-1.400 1.500-1.500C8.500 5.200 14.400 3.500 18 0z" fill="#1f1f3f"/><path d="M11.500 20l5 5 8-9" fill="none" stroke="#0beaff" stroke-width="2.600"/>`,
  info: svg`<circle cx="14" cy="14" r="14" fill="#1f1f3f"/><path d="M10.500 11.800h4.800v7.400M10.500 19.700h7.500" stroke="#0beaff" stroke-width="2.200" fill="none"/><circle cx="14.200" cy="8" r="1.700" fill="#0beaff"/>`,
  place: svg`<path fill-rule="evenodd" d="M12.500 0C19.500 0 25 5.300 25 12c0 5-2.500 8.500-12.500 20C2.500 20.500 0 17 0 12 0 5.300 5.500 0 12.500 0zm0 7a5.300 5.300 0 1 0 0 10.600 5.300 5.300 0 0 0 0-10.600z"/>`,
  directions: svg`<path fill-rule="evenodd" d="M14.600.6a2 2 0 0 1 2.800 0l14 14a2 2 0 0 1 0 2.800l-14 14a2 2 0 0 1-2.800 0l-14-14a2 2 0 0 1 0-2.800zM18 10v3.200h-5c-1.800 0-3.200 1.400-3.200 3.200v3.900h2.600v-3.200c0-.8.500-1.300 1.200-1.300H18V19l5-4.500z"/>`,
  globe: svg`<circle cx="16" cy="16" r="16"/><g fill="none" stroke="#fff" stroke-width="1.900"><ellipse cx="16" cy="16" rx="7" ry="17"/><path d="M0 10.300h32M0 21.700h32"/></g>`,
  arrow: svg`<circle cx="20" cy="20" r="20" fill="#ff69c8"/><path d="M10.500 20h18.500M22 12l8 8-8 8" fill="none" stroke="#14101c" stroke-width="2.800" stroke-linecap="round" stroke-linejoin="round"/>`,
  phone: svg`<path d="M493.400 24.600l-104-24c-11.300-2.600-22.900 3.300-27.500 13.900l-48 112c-4.200 9.800-1.400 21.300 6.900 28l60.600 49.600c-36 76.700-98.900 140.500-177.200 177.200l-49.600-60.600c-6.800-8.300-18.200-11.100-28-6.900l-112 48C3.900 366.500-2 378.100.6 389.400l24 104C27.100 504.200 36.700 512 48 512c256.100 0 464-207.500 464-464 0-11.200-7.700-20.900-18.600-23.400z"/>`,
  whatsapp: svg`<path d="M2.800 50L6.300 37A23.600 23.600 0 1 1 14.800 46.600z" fill="none" stroke="currentColor" stroke-width="4.300"/><path d="M17.500 14.200C15 14 13 16 13 19.500 13.300 29 22 38 32 38.700c4 0 6.500-2.700 7-5.200.3-2-2-3-3.500-3.700-2-.8-4 2.200-5.500 3.200-4-1-7.500-5-9.500-9 2-2 1.500-3.500.7-6-.7-2.500-1.200-3.800-3.700-3.800z" fill="currentColor"/>`,
  message: svg`<path d="M2.600 44.800C4 41 4.300 37.500 3.800 34A21.600 21.600 0 1 1 13 42.400C9.500 42.200 6.500 43.600 2.600 44.800z" fill="none" stroke="currentColor" stroke-width="2.900" stroke-linejoin="round"/><g fill="currentColor"><circle cx="12.300" cy="23.500" r="2.800"/><circle cx="23" cy="23.500" r="2.800"/><circle cx="33.700" cy="23.500" r="2.800"/></g>`,
  search: svg`<circle cx="19.500" cy="19.500" r="16" fill="none" stroke="currentColor" stroke-width="7"/><path d="M32 32l12.500 12.500" stroke="currentColor" stroke-width="7.500" stroke-linecap="round"/>`,
  locate: svg`<circle cx="20" cy="20" r="14.500" fill="none" stroke="currentColor" stroke-width="4"/><circle cx="20" cy="20" r="5" fill="currentColor"/><path d="M20 1.500v5M20 33.500v5M1.500 20h5M33.500 20h5" stroke="currentColor" stroke-width="3.600" stroke-linecap="round"/>`,
};

@customElement('locksmith-card')
export class LocksmithCard extends LitElement {
  @property({ attribute: false }) locksmith!: Locksmith;

  static styles = css`
    :host {
      display: flex;
      justify-content: space-between;
      align-items: flex-start;
      box-sizing: border-box;
      width: 1364px;
      padding: 50px 50px 58px;
      background: #fff;
      color: #050a41;
      font-family: Montserrat, Inter, sans-serif;
      flex: none;
    }
    svg {
      display: block;
      flex: none;
    }
    .info {
      width: 690px;
    }
    .licence {
      display: flex;
      align-items: center;
      box-sizing: border-box;
      width: fit-content;
      height: 66px;
      padding: 0 24px;
      background: #0beaff;
      font-size: 26px;
      white-space: nowrap;
    }
    .licence span {
      margin: 0 10px 0 10px;
    }
    .licence b {
      margin-right: 11px;
    }
    h2 {
      margin: 32px 0 0;
      font-size: 48px;
      line-height: 57.5px;
      font-weight: 700;
    }
    .area {
      display: flex;
      align-items: center;
      box-sizing: border-box;
      width: fit-content;
      height: 64px;
      margin-top: 33px;
      padding: 0 24px;
      gap: 15px;
      background: #eee;
      font-size: 26px;
      font-weight: 700;
      white-space: nowrap;
    }
    .address {
      margin: 31px 0 29px;
      font-size: 32px;
      line-height: 48px;
    }
    .links {
      display: flex;
      gap: 41px;
      margin-bottom: 32px;
    }
    .link {
      display: flex;
      align-items: center;
      gap: 16px;
      height: 40px;
      color: inherit;
      font-size: 32px;
      font-weight: 700;
      text-decoration: none;
      white-space: nowrap;
    }
    .link span {
      text-decoration: underline 3px;
      text-underline-offset: 3px;
    }
    .actions {
      display: flex;
      flex-direction: column;
      gap: 20px;
      width: 500px;
    }
    .button {
      display: flex;
      align-items: center;
      justify-content: center;
      box-sizing: border-box;
      height: 120px;
      padding: 0 34px;
      border-radius: 10px;
      font-size: 36px;
      line-height: 36px;
      font-weight: 700;
      color: #fff;
      text-align: center;
    }
    .call {
      gap: 16px;
      background: #050a41;
    }
    .whatsapp {
      gap: 17px;
      background: #25d366;
      color: #0d1353;
    }
    .message {
      gap: 23px;
      background: #001489;
      font-family: Arial, 'Liberation Sans', sans-serif;
      font-size: 40px;
    }
  `;

  render() {
    const { licence, name, area, address, phone } = this.locksmith;
    return html`
      <div class="info">
        <div class="licence">
          <svg width="36" height="42" viewBox="0 0 36 42">${ICONS.shield}</svg>
          <span>Licence No:</span><b>${licence}</b>
          <svg width="28" height="28" viewBox="0 0 28 28">${ICONS.info}</svg>
        </div>
        <h2>${name}</h2>
        <div class="area">
          <svg width="25" height="32" viewBox="0 0 25 32" fill="currentColor">${ICONS.place}</svg>
          Locksmith covering ${area}
        </div>
        <p class="address">${address}</p>
        <div class="links">
          <a class="link">
            <svg width="32" height="32" viewBox="0 0 32 32" fill="currentColor">${ICONS.directions}</svg>
            <span>Directions</span>
          </a>
          <a class="link">
            <svg width="32" height="32" viewBox="0 0 32 32" fill="currentColor">${ICONS.globe}</svg>
            <span>Website</span>
          </a>
        </div>
        <a class="link">
          <svg width="40" height="40" viewBox="0 0 40 40">${ICONS.arrow}</svg>
          <span>View Locksmith Details</span>
        </a>
      </div>
      <div class="actions">
        <div class="button call">
          <svg width="40" height="40" viewBox="0 0 512 512" fill="currentColor">${ICONS.phone}</svg>
          <span>CALL ${phone}</span>
        </div>
        <div class="button whatsapp">
          <svg width="53" height="53" viewBox="0 0 53 53">${ICONS.whatsapp}</svg>
          <span>WHATSAPP</span>
        </div>
        <div class="button message">
          <svg width="47" height="47" viewBox="0 0 47 47">${ICONS.message}</svg>
          <span>MESSAGE</span>
        </div>
      </div>
    `;
  }
}

@customElement('locksmith-map')
export class LocksmithMap extends LitElement {
  static styles = css`
    :host {
      display: block;
      position: relative;
      width: 1422px;
      height: 1122px;
      overflow: hidden;
      background: #f7f7f7;
      font-family: Roboto, sans-serif;
    }
    .canvas {
      display: block;
    }
    .tile path {
      vector-effect: non-scaling-stroke;
      fill: none;
      stroke-linejoin: round;
    }
    .tile .park { fill: #c3f0d5; }
    .tile .light { fill: #d3f6e1; }
    .tile .water { fill: #90daee; }
    .tile .minor { stroke: #d5dde8; stroke-width: 1.9px; }
    .tile .rail { stroke: #dedfe3; stroke-width: 1.5px; }
    .tile .ties { stroke: #dedfe3; stroke-width: 7px; stroke-dasharray: 1.3 17; }
    .tile .yard { stroke: #dadbe0; stroke-width: 7px; stroke-dasharray: 2 0.6; }
    .tile .casing { stroke: #7586bd; stroke-width: 5.8px; }
    .tile .major { stroke: #a7b7da; stroke-width: 3.6px; }
    .river { fill: none; stroke: #90daee; stroke-linejoin: round; }
    text {
      paint-order: stroke;
      stroke: #fff;
      stroke-width: 5px;
      stroke-linejoin: round;
    }
    .town { font-size: 23.5px; fill: #30393c; }
    .district { font-size: 23.5px; font-weight: 500; fill: #434a4e; }
    .small { font-size: 19px; }
    .poi { font-size: 24px; fill: #7780bd; }
    .sight { font-size: 27.5px; fill: #5c6288; }
    .green { font-size: 27.5px; fill: #17806a; }
    .city { font-size: 50px; font-weight: 700; fill: #2b3839; }
    .river-name { font-size: 22px; fill: #16809c; stroke: none; letter-spacing: 0.6px; }
    .shield {
      font-size: 19px;
      font-weight: 700;
      fill: #ffe100;
      stroke: none;
      text-anchor: middle;
    }
    .shield.m { fill: #fff; }
    .fullscreen {
      position: absolute;
      top: 20px;
      right: 20px;
      display: grid;
      place-items: center;
      width: 80px;
      height: 80px;
      border-radius: 4px;
      background: #fff;
      box-shadow: 0 2px 8px rgba(0, 0, 0, 0.18);
    }
    .zoom {
      position: absolute;
      top: 480px;
      right: 2px;
      display: flex;
      flex-direction: column;
      gap: 2px;
      background: #fff;
    }
    .zoom span {
      display: grid;
      place-items: center;
      width: 80px;
      height: 80px;
      background: #050a41;
      color: #f6d905;
      font: 54px/1 Arial, 'Liberation Sans', sans-serif;
    }
    .google {
      position: absolute;
      left: 19px;
      bottom: 7px;
      font: 600 36px/44px Montserrat, Inter, sans-serif;
      letter-spacing: -2.6px;
      -webkit-text-stroke: 3px #fff;
      paint-order: stroke fill;
    }
    .b { color: #2ba4e0; }
    .r { color: #ea4a3b; }
    .y { color: #f7d000; }
    .g { color: #1bae58; }
    .legal {
      position: absolute;
      right: 0;
      bottom: 0;
      display: flex;
      gap: 25px;
      padding: 0 12px 0 10px;
      background: rgba(245, 245, 245, 0.7);
      color: #000;
      font-size: 20px;
      line-height: 28px;
      white-space: nowrap;
    }
  `;

  renderLand(t: Tile) {
    return svg`<g class="tile" transform="translate(${t.x} ${t.y}) scale(${1 / 3} ${1 / t.sy})">
      <path class="light" d=${t.light ?? ''} />
      <path class="park" d=${t.parks} />
      <path class="water" d=${t.water ?? ''} />
    </g>`;
  }

  renderRoads(t: Tile) {
    return svg`<g class="tile" transform="translate(${t.x} ${t.y}) scale(${1 / 3} ${1 / t.sy})">
      <path class="rail" d=${t.rail} />
      <path class="ties" d=${t.rail} />
      <path class="yard" d=${t.yard ?? ''} />
      <path class="minor" d=${t.minor} />
      <path class="casing" d=${t.major} />
      <path class="major" d=${t.major} />
    </g>`;
  }

  renderShield([text, x, y]: [string, number, number]) {
    const motorway = text.startsWith('M');
    const w = motorway ? 36 : 12 + text.length * 10;
    return svg`
      <rect x=${x - w / 2} y=${y - 13} width=${w} height="26" rx="3.5" fill=${motorway ? '#7480b8' : '#6b9f45'} />
      <text class="shield ${motorway ? 'm' : ''}" x=${x} y=${y + 6.8}>${text}</text>`;
  }

  renderPin([x, y]: number[]) {
    return svg`<g transform="translate(${x} ${y})">
      <path d="M0-1C-4-1-7-4-11-10-22-27-37-44-37-64-37-84-20-99 0-99S37-84 37-64C37-44 22-27 11-10 7-4 4-1 0-1z" fill="#050a41" stroke="#f6d905" stroke-width="2" />
      ${[1, -1].map((s) => svg`<g transform="scale(${s} 1)" stroke="#f6d905" fill="none">
        <ellipse cx="-15" cy="-71" rx="7" ry="5.500" stroke-width="2.400" transform="rotate(-40 -15 -71)" />
        <path d="M10-66.500L-15-37.500" stroke-width="2" />
        <path d="M-22-47l3.500.5-.5-3 2.500-3.500 1.500 3 2-2.500 1 3 2.500-1.500 0 3 1.500 2.500-6.500 6.500-2.500-1.500-2.500 0z" fill="#f6d905" stroke="none" />
      </g>`)}
    </g>`;
  }

  render() {
    return html`
      <svg class="canvas" width="1422" height="1122" viewBox="1540 422 1422 1122">
        ${TILES.map((t) => this.renderLand(t))}
        <path class="river" d=${THAMES} stroke-width="14" />
        <path class="river" d=${THAMES_EAST} stroke-width="25" />
        <path class="river" d=${THAMES_WEST} stroke-width="9" />
        <path class="river" d=${THAMES_UPPER} stroke-width="5" />
        ${TILES.map((t) => this.renderRoads(t))}
        <path id="bend" d="M2480 945Q2482 985 2494 1006Q2520 1044 2572 1016" fill="none" />
        <text class="river-name"><textPath href="#bend" startOffset="10">River Thames</textPath></text>
        <text class="river-name" x="1918" y="1093" transform="rotate(22 1918 1093)" textLength="66">Thames</text>
        ${LABELS.map(([text, x, y, w, kind]) => svg`<text class=${kind} x=${x} y=${y} textLength=${w}>${text}</text>`)}
        ${SHIELDS.map((s) => this.renderShield(s))}
        <g transform="translate(2354 896)">
          <path d="M0 31C-5 24-24 18-24 0a24 24 0 0 1 48 0C24 18 5 24 0 31z" fill="#fff" />
          <circle r="20" fill="#7d8399" />
          <path d="M-10 6.500H10M-7-9V6M7-9V6M-2-9V2M2-9V2M-7 2Q0-4 7 2M-7-3H7" stroke="#fff" stroke-width="2" fill="none" />
        </g>
        ${PINS.map((p) => this.renderPin(p))}
        <circle cx="2199.500" cy="924" r="25" fill="#000" opacity="0.15" />
        <circle cx="2199.500" cy="921.500" r="24" fill="#fff" />
        <circle cx="2199.500" cy="921.500" r="19.500" fill="#ff69c8" />
      </svg>
      <div class="fullscreen">
        <svg width="36" height="36" viewBox="0 0 36 36" fill="none" stroke="#666" stroke-width="4">
          <path d="M2 12V2H12M24 2H34V12M34 24V34H24M12 34H2V24" />
        </svg>
      </div>
      <div class="zoom"><span>+</span><span>-</span></div>
      <div class="google"><span class="b">G</span><span class="r">o</span><span class="y">o</span><span class="b">g</span><span class="g">l</span><span class="r">e</span></div>
      <div class="legal">
        <span>Keyboard shortcuts</span>
        <span>Map data ©2025 Google</span>
        <span>Terms</span>
        <span>Report a map error</span>
      </div>
    `;
  }
}

@customElement('app-root')
export class AppRoot extends LitElement {
  static styles = css`
    :host {
      display: flex;
      gap: 60px;
      box-sizing: border-box;
      width: 3022px;
      height: 1648px;
      padding: 38px 60px 0 58px;
      overflow: hidden;
      border-top: 4px solid #343f40;
      background: #eee;
      color: #050a41;
      font-family: Montserrat, Inter, sans-serif;
    }
    .left,
    .right {
      width: 1422px;
    }
    .heading {
      display: flex;
      align-items: center;
      box-sizing: border-box;
      width: 1392px;
      height: 270px;
      padding: 0 60px;
      background: #fff;
    }
    h1 {
      margin: 0;
      font-size: 80px;
      font-weight: 700;
      white-space: nowrap;
    }
    .results {
      display: flex;
      justify-content: space-between;
      height: 1296px;
      margin-top: 40px;
    }
    .cards {
      display: flex;
      flex-direction: column;
      gap: 30px;
      overflow: hidden;
    }
    .track {
      box-sizing: border-box;
      width: 28px;
      padding: 4px;
      border-radius: 14px 14px 0 0;
      background: #cdcdcd;
    }
    .thumb {
      height: 444px;
      border-radius: 10px;
      background: #646665;
    }
    .finder {
      box-sizing: border-box;
      height: 350px;
      margin-bottom: 30px;
      padding: 41px 40px 0 30px;
      background: #050a41;
      color: #fff;
    }
    h3 {
      margin: 0 0 23px;
      font-size: 40px;
      line-height: 48px;
      font-weight: 700;
    }
    .field {
      display: flex;
      height: 118px;
    }
    .submit {
      display: grid;
      place-items: center;
      width: 110px;
      background: #f6d905;
      color: #050a41;
    }
    .input {
      display: flex;
      align-items: center;
      box-sizing: border-box;
      flex: 1;
      padding-left: 36px;
      border: 2px solid #fff;
      background: #f6f6f6;
      color: #75787b;
      font: 36px Arial, 'Liberation Sans', sans-serif;
    }
    .locate {
      display: flex;
      align-items: center;
      gap: 10px;
      margin: 20px 0 0 12px;
      height: 40px;
      font-size: 32px;
    }
    .locate span {
      text-decoration: underline 3px #777;
      text-underline-offset: 3px;
    }
  `;

  render() {
    return html`
      <div class="left">
        <div class="heading"><h1>London Locksmith</h1></div>
        <div class="results">
          <div class="cards">
            ${LOCKSMITHS.map((l) => html`<locksmith-card .locksmith=${l}></locksmith-card>`)}
          </div>
          <div class="track"><div class="thumb"></div></div>
        </div>
      </div>
      <div class="right">
        <div class="finder">
          <h3>Find your nearest Locksmith</h3>
          <div class="field">
            <div class="submit">
              <svg width="48" height="48" viewBox="0 0 48 48">${ICONS.search}</svg>
            </div>
            <div class="input">Postcode, city or county</div>
          </div>
          <div class="locate">
            <svg width="40" height="40" viewBox="0 0 40 40">${ICONS.locate}</svg>
            <span>Use My current Location</span>
          </div>
        </div>
        <locksmith-map></locksmith-map>
      </div>
    `;
  }
}
